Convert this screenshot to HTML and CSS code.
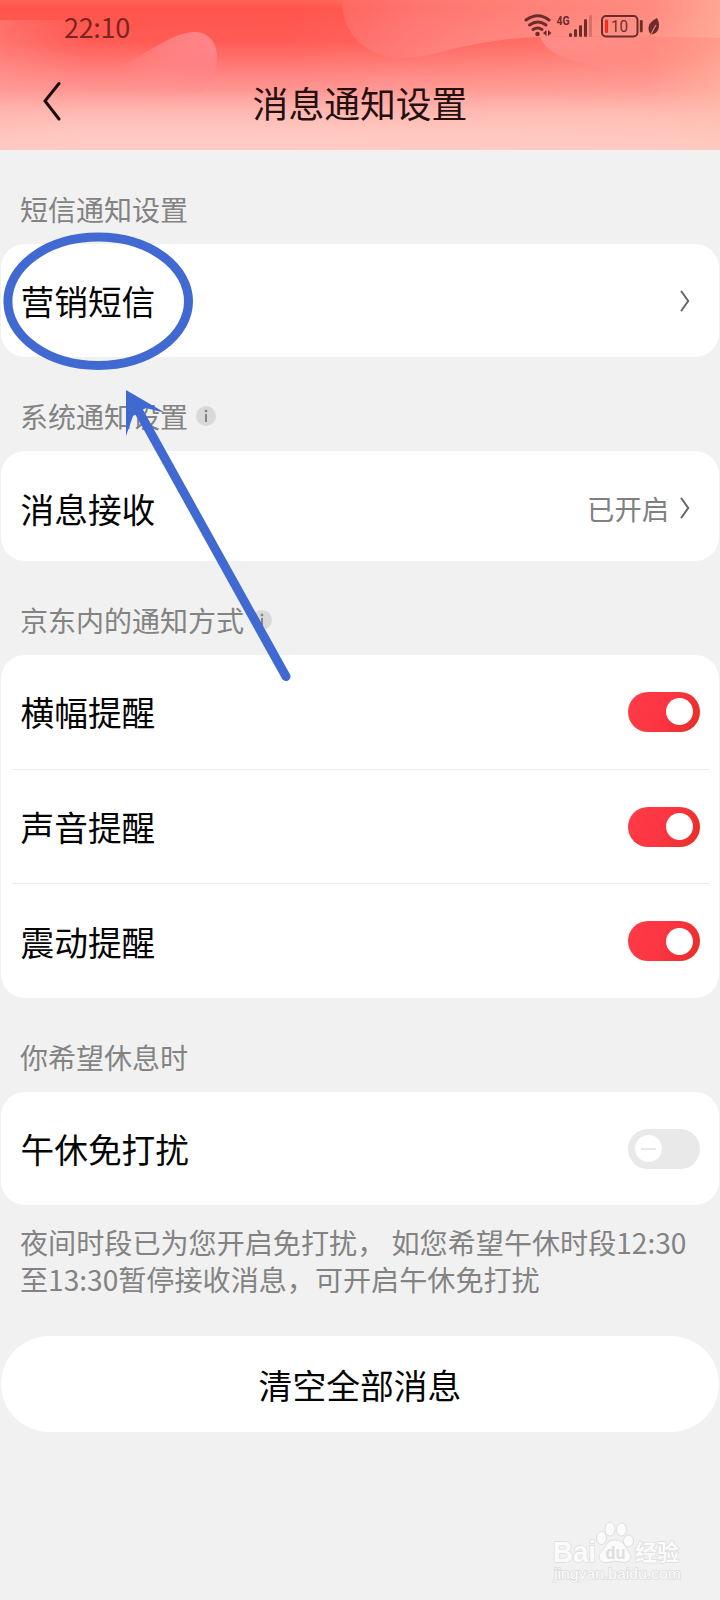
FILE: index.html
```html
<!DOCTYPE html>
<html lang="zh-CN">
<head>
<meta charset="utf-8">
<title>消息通知设置</title>
<link rel="stylesheet" href="styles.css">
</head>
<body>
<div class="page">
  <header class="header">
    <svg class="header-art" viewBox="0 0 720 150" preserveAspectRatio="none" aria-hidden="true">
      <defs>
        <linearGradient id="base" x1="0" y1="0" x2="0" y2="1">
          <stop offset="0" stop-color="#ff6157"/><stop offset=".06" stop-color="#ff544a"/><stop offset=".28" stop-color="#ff5c56"/>
          <stop offset=".5" stop-color="#ff8582"/><stop offset=".75" stop-color="#ffafab"/><stop offset="1" stop-color="#ffcec9"/>
        </linearGradient>
        <linearGradient id="drop" gradientUnits="userSpaceOnUse" x1="217" y1="50" x2="125" y2="85">
          <stop offset="0" stop-color="#ff8588"/><stop offset=".45" stop-color="#ff8b90" stop-opacity=".7"/><stop offset="1" stop-color="#ffa09f" stop-opacity="0"/>
        </linearGradient>
        <linearGradient id="dropFade" x1="0" y1="0" x2="0" y2="1">
          <stop offset=".3" stop-color="#fff"/><stop offset="1" stop-color="#000"/>
        </linearGradient>
        <mask id="dropMask"><rect x="80" y="28" width="150" height="76" fill="url(#dropFade)"/></mask>
        <linearGradient id="wave" x1="0" y1="0" x2="1" y2="0">
          <stop offset="0" stop-color="#ff6b68"/><stop offset=".2" stop-color="#ff7878"/><stop offset=".55" stop-color="#ff857f"/><stop offset="1" stop-color="#ff8f84"/>
        </linearGradient>
        <linearGradient id="waveFade" x1="0" y1="0" x2="0" y2="1">
          <stop offset="0" stop-color="#999"/><stop offset="1" stop-color="#fff"/>
        </linearGradient>
        <mask id="waveMask"><rect x="340" width="380" height="60" fill="url(#waveFade)"/></mask>
        <linearGradient id="wave2" x1="0" y1="0" x2="1" y2=".2">
          <stop offset="0" stop-color="#ff8184"/><stop offset=".5" stop-color="#ff8582" stop-opacity=".8"/><stop offset="1" stop-color="#ff9c88" stop-opacity="0"/>
        </linearGradient>
        <linearGradient id="wave2Fade" x1="0" y1="0" x2="0" y2="1">
          <stop offset=".3" stop-color="#fff"/><stop offset="1" stop-color="#222"/>
        </linearGradient>
        <mask id="wave2Mask"><rect x="535" y="30" width="190" height="50" fill="url(#wave2Fade)"/></mask>
        <linearGradient id="right" x1="0" y1="0" x2="1" y2="0">
          <stop offset=".4" stop-color="#ffb9a6" stop-opacity="0"/><stop offset=".9" stop-color="#ffb5a2" stop-opacity=".3"/><stop offset="1" stop-color="#ffb8a2" stop-opacity=".7"/>
        </linearGradient>
        <linearGradient id="left" x1="0" y1="0" x2="1" y2="0">
          <stop offset="0" stop-color="#ffa09c" stop-opacity=".35"/><stop offset=".12" stop-color="#ffa09c" stop-opacity="0"/>
        </linearGradient>
        <linearGradient id="floor" x1="0" y1="0" x2="0" y2="1">
          <stop offset="0" stop-color="#ffcbc3" stop-opacity="0"/><stop offset="1" stop-color="#ffcbc3" stop-opacity=".9"/>
        </linearGradient>
      </defs>
      <rect width="720" height="150" fill="url(#base)"/>
      <rect y="20" width="720" height="130" fill="url(#left)"/>
      <path d="M120 66C150 53 172 32 195 32C209 32 218 44 217 59C216 79 205 96 178 100C150 104 120 100 90 90Z" fill="url(#drop)" mask="url(#dropMask)"/>
      <path d="M342 0H720V38C650 36 590 36 535 37C455 42 440 58 400 58C370 57 342 38 342 0Z" fill="url(#wave)" mask="url(#waveMask)"/>
      <path d="M540 37C552 64 590 61 620 75C650 80 690 76 720 68V34C660 36 600 36 540 37Z" fill="url(#wave2)" mask="url(#wave2Mask)"/>
      <rect width="720" height="150" fill="url(#right)"/>
      <rect y="90" width="720" height="60" fill="url(#floor)"/>
    </svg>
    <div class="status">
      <span class="time">22:10</span>
      <svg class="status-icons" viewBox="0 0 140 30" aria-hidden="true">
        <g fill="none" stroke="#6d2c2a" stroke-width="3" stroke-linecap="round">
          <path d="M6 8Q18 -.5 29 8"/><path d="M9.500 13Q18 7 26 13"/><path d="M13 17.500Q17.500 14.500 22 17.500"/>
        </g>
        <circle cx="17.500" cy="22" r="2.300" fill="#6d2c2a"/>
        <path d="M26.500 18V24L23 21ZM28 18L31.500 21L28 24Z" fill="#6d2c2a"/>
        <text class="network" x="36.500" y="12.500" textLength="13" lengthAdjust="spacingAndGlyphs">4G</text>
        <g stroke="#6d2c2a" stroke-width="3" stroke-linecap="round">
          <path d="M50.500 22.500V23.500M55.500 18.500V23.500M60.500 14.500V23.500M65.500 8.500V23.500"/><path d="M70.500 4.500V23.500" opacity=".28"/>
        </g>
        <rect x="82" y="4" width="35.500" height="20.500" rx="4" fill="none" stroke="#6d2c2a" stroke-width="2"/>
        <rect x="85" y="7.500" width="3" height="13.500" rx="1" fill="#f42c22"/>
        <text class="charge" x="91" y="20.300" textLength="17" lengthAdjust="spacingAndGlyphs">10</text>
        <path d="M121.300 9.500V19" stroke="#6d2c2a" stroke-width="2.800" stroke-linecap="round"/>
        <path d="M137 6C141 13 139 22 131 22.500C127 18 127 11 137 6Z" fill="#6d2c2a"/>
        <path d="M130 24.500Q133.500 17 136 13" fill="none" stroke="#ef8078" stroke-width="1.200"/>
      </svg>
    </div>
    <div class="nav">
      <svg class="back" viewBox="0 0 20 40" aria-hidden="true"><path d="M17 2.500L3 20L17 38"/></svg>
      <h1 class="title">消息通知设置</h1>
    </div>
  </header>

  <main class="content">
    <h2 class="label">短信通知设置</h2>
    <section class="card sms">
      <div class="row"><span>营销短信</span><svg class="chevron" viewBox="0 0 10 22"><path d="M1.500 1.500L8.200 11L1.500 20.500"/></svg></div>
    </section>

    <h2 class="label">系统通知设置<i class="info"></i></h2>
    <section class="card receive">
      <div class="row"><span>消息接收</span><span class="state">已开启<svg class="chevron" viewBox="0 0 10 22"><path d="M1.500 1.500L8.200 11L1.500 20.500"/></svg></span></div>
    </section>

    <h2 class="label">京东内的通知方式<i class="info"></i></h2>
    <section class="card modes">
      <div class="row"><span>横幅提醒</span><i class="toggle on"></i></div>
      <div class="row"><span>声音提醒</span><i class="toggle on"></i></div>
      <div class="row"><span>震动提醒</span><i class="toggle on"></i></div>
    </section>

    <h2 class="label">你希望休息时</h2>
    <section class="card rest">
      <div class="row"><span>午休免打扰</span><i class="toggle off"></i></div>
    </section>
    <p class="note">夜间时段已为您开启免打扰， 如您希望午休时段12:30<br>至13:30暂停接收消息，可开启午休免打扰</p>
    <button class="clear">清空全部消息</button>
  </main>

  <svg class="annotation" viewBox="0 0 300 460" aria-hidden="true">
    <ellipse cx="98.200" cy="71.300" rx="90.300" ry="64.200"/>
    <path class="shaft" d="M138 180L286 446.500"/>
    <path class="head" d="M126 160L165 182.700L145.600 178L133 186L126 206Z"/>
  </svg>

  <svg class="watermark" viewBox="0 0 140 64" aria-hidden="true">
    <text class="brand" x="1" y="42" textLength="43" lengthAdjust="spacingAndGlyphs">Bai</text>
    <g class="paw">
      <ellipse cx="49.500" cy="18" rx="5" ry="6.500"/><ellipse cx="58" cy="9" rx="5" ry="7"/>
      <ellipse cx="69.500" cy="9.500" rx="5" ry="6.500"/><ellipse cx="76.500" cy="21" rx="5" ry="6"/>
      <path d="M63 20C73 20 73 28 77 32C82 39 76 44 69 42C65 41 60 41 56 42.500C48 44 44 37 50 31C54 27 54 20 63 20Z"/>
    </g>
    <text class="du" x="53.500" y="39" textLength="20" lengthAdjust="spacingAndGlyphs">du</text>
    <text class="cn" x="83" y="40" textLength="44" lengthAdjust="spacingAndGlyphs">经验</text>
    <text class="url" x="2" y="59" textLength="127" lengthAdjust="spacingAndGlyphs">jingyan.baidu.com</text>
  </svg>
</div>
</body>
</html>
```
FILE: styles.css
```css
* { box-sizing: border-box; }

body {
  margin: 0;
  font-family: "Noto Sans CJK SC", sans-serif;
  background: #f1f1f1;
}

.page {
  position: relative;
  width: 720px;
  height: 1600px;
  overflow: hidden;
  background: #f1f1f1;
}

.header {
  position: relative;
  height: 150px;
}

.header-art {
  position: absolute;
  inset: 0;
  width: 720px;
  height: 150px;
}

.status {
  position: relative;
  display: flex;
  justify-content: space-between;
  height: 54px;
  padding: 12px 60px 0 64px;
}

.time {
  color: #7d2422;
  font-size: 27px;
  line-height: 30px;
  letter-spacing: -0.3px;
}

.status-icons {
  width: 140px;
  height: 30px;
}

.network {
  font: bold 12px Roboto, sans-serif;
  fill: #6d2c2a;
}

.charge {
  font: 17px Roboto, sans-serif;
  fill: #6d2c2a;
}

.nav {
  position: relative;
  display: grid;
  grid-template-columns: 62px 1fr 62px;
  align-items: center;
  height: 96px;
}

.back {
  justify-self: end;
  width: 20px;
  height: 40px;
  margin-bottom: 3px;
  fill: none;
  stroke: #1d0d0c;
  stroke-width: 3;
  stroke-linecap: round;
}

.title {
  margin: 0;
  text-align: center;
  color: #24100f;
  font-size: 35.8px;
  font-weight: 400;
  line-height: 54px;
}

.content {
  display: flex;
  flex-direction: column;
  padding: 0 1px;
}

.label {
  display: flex;
  align-items: center;
  height: 94px;
  margin: 0;
  padding: 23px 19px 0;
  color: #838383;
  font-size: 28px;
  font-weight: 400;
}

.info {
  display: inline-block;
  width: 20px;
  height: 20px;
  margin: 1px 0 0 8px;
  border-radius: 50%;
  background:
    radial-gradient(circle at 10px 5px, #858585 1.2px, transparent 1.7px),
    linear-gradient(#858585, #858585) 9px 8px / 2px 8px no-repeat,
    #d9d9d9;
}

.card {
  display: flex;
  flex-direction: column;
  border-radius: 24px;
  background: #fff;
}

.sms,
.rest { height: 113px; }
.receive { height: 110px; padding-top: 4px; }
.modes { height: 343px; }

.row {
  display: flex;
  flex: 1;
  align-items: center;
  justify-content: space-between;
  margin: 0 10px 0 11px;
  padding: 0 9px 0 8.500px;
  color: #050505;
  font-size: 33.7px;
}

.row + .row { border-top: 1px solid #ececec; }

.chevron {
  width: 10px;
  height: 22px;
  margin-right: 10px;
  fill: none;
  stroke: #666;
  stroke-width: 2;
  stroke-linecap: round;
}

.state {
  display: flex;
  align-items: center;
  gap: 11px;
  color: #808080;
  font-size: 27.3px;
}

.toggle {
  display: flex;
  align-items: center;
  width: 72px;
  height: 40px;
  padding: 0 7px;
  border-radius: 20px;
}

.toggle::before {
  content: "";
  width: 27px;
  height: 27px;
  border-radius: 50%;
  background: #fff;
}

.on {
  justify-content: flex-end;
  background: linear-gradient(115deg, #ff3c48, #fb3440 55%, #e72e24);
}

.off { background: #e9e9e9; }

.off::before {
  background: linear-gradient(#e7e7e7, #e7e7e7) center / 15px 2px no-repeat, #fff;
}

.note {
  height: 131px;
  margin: 0;
  padding: 18px 19px 0;
  color: #838383;
  font-size: 28.1px;
  line-height: 37px;
  white-space: nowrap;
}

.clear {
  height: 96px;
  padding: 0;
  border: 0;
  border-radius: 48px;
  background: #fff;
  color: #050505;
  font-family: inherit;
  font-size: 33.8px;
}

.annotation {
  position: absolute;
  top: 230px;
  left: 0;
  width: 300px;
  height: 460px;
  fill: none;
  stroke: #4169d2;
  stroke-width: 9;
  stroke-linecap: round;
}

.head {
  fill: #4169d2;
  stroke: none;
}

.watermark {
  position: absolute;
  top: 1520px;
  left: 552px;
  width: 140px;
  height: 64px;
  fill: #fbfbfb;
  stroke: #dedede;
  stroke-width: 1;
}

.watermark text {
  paint-order: stroke;
  stroke-width: 1.5px;
}

.brand { font: bold 29px "Liberation Sans", sans-serif; }
.watermark .du { font: bold 19px "Liberation Sans", sans-serif; fill: #dedede; stroke: none; }
.cn { font: bold 22px "Noto Sans CJK SC", sans-serif; }
.url { font: 14px "Liberation Sans", sans-serif; }
```
